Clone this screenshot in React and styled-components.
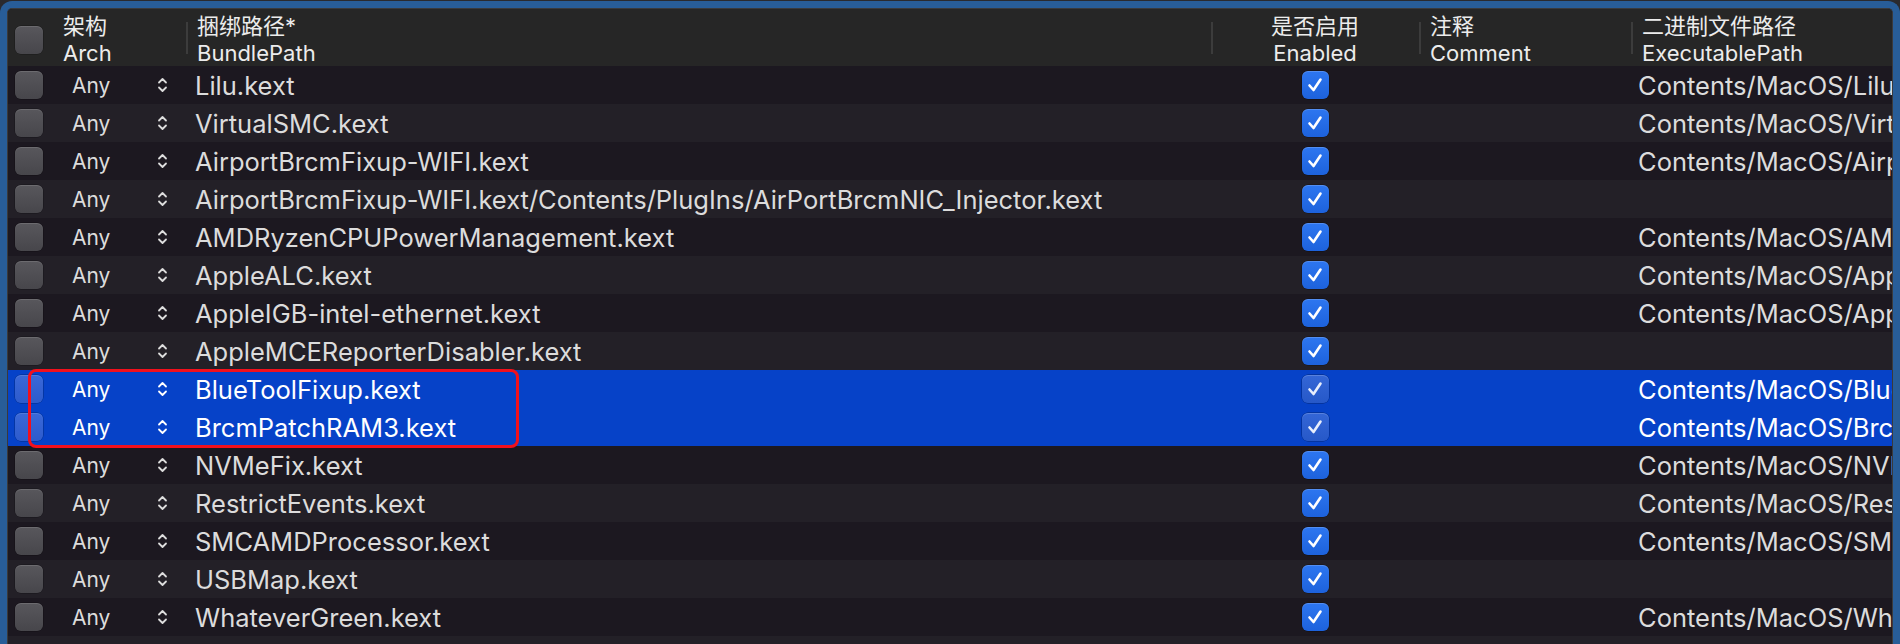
import React from 'react';
import styled, { createGlobalStyle } from 'styled-components';

const Global = createGlobalStyle`
  html, body { margin: 0; padding: 0; background: #2a2a2e; overflow: hidden; }
  body { font-family: Inter, "Noto Sans CJK SC", sans-serif; -webkit-font-smoothing: antialiased; }
`;

const COLS = '44px 134px 1025px 208px 212px 1fr';

const Frame = styled.div`
  margin-top: 1px;
  width: 1900px;
  height: 700px;
  box-sizing: border-box;
  border: 7px solid #285d98;
  border-bottom: none;
  border-radius: 12px 12px 0 0;
  background: #285d98;
`;

const Panel = styled.div`
  height: 100%;
  box-sizing: border-box;
  border: 1px solid #3a3a3c;
  border-bottom: none;
  border-radius: 5px 5px 0 0;
  background: #1d1a22;
  overflow: hidden;
`;

const HeaderRow = styled.div`
  display: grid;
  grid-template-columns: ${COLS};
  height: 57px;
  background: #262626;
`;

const HeaderCell = styled.div`
  position: relative;
  box-sizing: border-box;
  padding: 4px 0 0 ${(p) => p.$pad ?? 11}px;
  text-align: ${(p) => (p.$center ? 'center' : 'left')};
  color: #ececec;
  font-size: 22px;
  line-height: 27px;
  white-space: nowrap;
  border-bottom: 2px solid #3b3b3b;
  &::before {
    content: '';
    display: ${(p) => (p.$divider ? 'block' : 'none')};
    position: absolute;
    left: 0;
    top: 13px;
    width: 2px;
    height: 32px;
    background: #3c3c3c;
  }
`;

const HeaderCheckCell = styled.div`
  display: flex;
  align-items: center;
  padding-left: 7px;
  padding-top: 2px;
`;

const Line = styled.div``;

const Body = styled.div`
  position: relative;
`;

const Row = styled.div`
  display: grid;
  grid-template-columns: ${COLS};
  height: 38px;
  align-items: center;
  background: ${(p) => (p.$selected ? '#0642c8' : p.$odd ? '#232027' : '#1c1820')};
  color: ${(p) => (p.$selected ? '#ffffff' : '#dcdcdc')};
`;

const CheckCell = styled.div`
  display: flex;
  align-items: center;
  padding-left: 7px;
`;

const Box = styled.div`
  width: 28px;
  height: 28px;
  box-sizing: border-box;
  border-radius: 6px;
  background: ${(p) =>
    p.$selected
      ? 'linear-gradient(#3a68d8, #2d5bcc)'
      : 'linear-gradient(#58575c, #47464b)'};
  box-shadow: inset 0 1px 0 rgba(255, 255, 255, 0.12), 0 0 0 0.5px rgba(0, 0, 0, 0.35);
`;

const ArchCell = styled.div`
  display: flex;
  align-items: center;
  justify-content: space-between;
  padding: 0 18px 0 20px;
  font-size: 21px;
`;

const PathCell = styled.div`
  padding-left: ${(p) => p.$pad ?? 9}px;
  font-size: 25.5px;
  white-space: nowrap;
  overflow: hidden;
`;

const CenterCell = styled.div`
  display: flex;
  justify-content: center;
  align-items: center;
`;

const Tick = styled.div`
  width: 27px;
  height: 28px;
  border-radius: 6px;
  display: flex;
  align-items: center;
  justify-content: center;
  background: ${(p) =>
    p.$selected ? 'linear-gradient(#3466d6, #2658c8)' : 'linear-gradient(#2d76f0, #1d62dc)'};
  box-shadow: inset 0 1px 0 rgba(255, 255, 255, 0.18), 0 0 0 0.5px rgba(0, 0, 0, 0.4);
`;

const Highlight = styled.div`
  position: absolute;
  left: 20px;
  top: 303px;
  width: 491px;
  height: 79px;
  box-sizing: border-box;
  border: 3px solid #f2101c;
  border-radius: 8px;
  pointer-events: none;
`;

const Chevron = () => (
  <svg width="11" height="18" viewBox="0 0 11 18" fill="none">
    <path d="M2 6.5 L5.5 3 L9 6.5" stroke="currentColor" strokeWidth="1.8" strokeLinecap="round" strokeLinejoin="round" />
    <path d="M2 11.5 L5.5 15 L9 11.5" stroke="currentColor" strokeWidth="1.8" strokeLinecap="round" strokeLinejoin="round" />
  </svg>
);

const Check = ({ selected }) => (
  <svg width="18" height="18" viewBox="0 0 18 18" fill="none">
    <path d="M3.5 9.5 L7.5 14 L14.5 3.5" stroke={selected ? '#e8eefc' : '#ffffff'} strokeWidth="2.6" strokeLinecap="round" strokeLinejoin="round" />
  </svg>
);

const rows = [
  ['Lilu.kext', 'Contents/MacOS/Lilu'],
  ['VirtualSMC.kext', 'Contents/MacOS/VirtualSMC'],
  ['AirportBrcmFixup-WIFI.kext', 'Contents/MacOS/AirportBrcmFixup'],
  ['AirportBrcmFixup-WIFI.kext/Contents/PlugIns/AirPortBrcmNIC_Injector.kext', ''],
  ['AMDRyzenCPUPowerManagement.kext', 'Contents/MacOS/AMDRyzenCPUPowerManagement'],
  ['AppleALC.kext', 'Contents/MacOS/AppleALC'],
  ['AppleIGB-intel-ethernet.kext', 'Contents/MacOS/AppleIGB'],
  ['AppleMCEReporterDisabler.kext', ''],
  ['BlueToolFixup.kext', 'Contents/MacOS/BlueToolFixup'],
  ['BrcmPatchRAM3.kext', 'Contents/MacOS/BrcmPatchRAM3'],
  ['NVMeFix.kext', 'Contents/MacOS/NVMeFix'],
  ['RestrictEvents.kext', 'Contents/MacOS/RestrictEvents'],
  ['SMCAMDProcessor.kext', 'Contents/MacOS/SMCAMDProcessor'],
  ['USBMap.kext', ''],
  ['WhateverGreen.kext', 'Contents/MacOS/WhateverGreen'],
];

export default function App() {
  return (
    <>
      <Global />
      <Frame>
        <Panel>
          <HeaderRow>
            <HeaderCheckCell>
              <Box />
            </HeaderCheckCell>
            <HeaderCell>
              <Line>架构</Line>
              <Line>Arch</Line>
            </HeaderCell>
            <HeaderCell $divider $pad={11}>
              <Line>捆绑路径*</Line>
              <Line>BundlePath</Line>
            </HeaderCell>
            <HeaderCell $divider $center $pad={0}>
              <Line>是否启用</Line>
              <Line>Enabled</Line>
            </HeaderCell>
            <HeaderCell $divider>
              <Line>注释</Line>
              <Line>Comment</Line>
            </HeaderCell>
            <HeaderCell $divider>
              <Line>二进制文件路径</Line>
              <Line>ExecutablePath</Line>
            </HeaderCell>
          </HeaderRow>
          <Body>
            {rows.map(([bundle, exec], i) => {
              const selected = i === 8 || i === 9;
              return (
                <Row key={bundle} $odd={i % 2 === 1} $selected={selected}>
                  <CheckCell>
                    <Box $selected={selected} />
                  </CheckCell>
                  <ArchCell>
                    <span>Any</span>
                    <Chevron />
                  </ArchCell>
                  <PathCell>{bundle}</PathCell>
                  <CenterCell>
                    <Tick $selected={selected}>
                      <Check selected={selected} />
                    </Tick>
                  </CenterCell>
                  <PathCell />
                  <PathCell $pad={7}>{exec}</PathCell>
                </Row>
              );
            })}
            <Row $odd />
            <Highlight />
          </Body>
        </Panel>
      </Frame>
    </>
  );
}
